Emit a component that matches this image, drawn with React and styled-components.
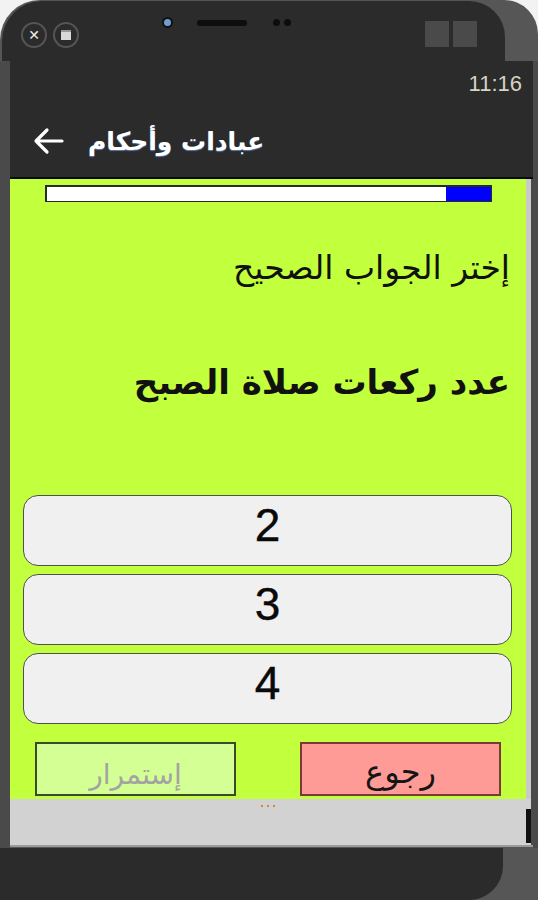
import React from "react";
import styled, { createGlobalStyle } from "styled-components";

const Global = createGlobalStyle`
  html, body { margin: 0; padding: 0; background: #f2f2f2; }
  body { font-family: "DejaVu Sans", "Liberation Sans", sans-serif; }
  * { box-sizing: border-box; }
`;

const Shell = styled.div`
  width: 538px;
  height: 900px;
  background: #565656;
  border-top-left-radius: 40px;
  border-top-right-radius: 34px;
  overflow: hidden;
  display: flex;
  flex-direction: column;
`;

const TopBezel = styled.div`
  height: 60px;
  width: 503px;
  background: #2b2b2b;
  border-top-left-radius: 40px;
  border-top-right-radius: 36px;
  margin-left: 2px;
  margin-top: 1px;
  display: flex;
  align-items: flex-start;
`;

const WinButtons = styled.div`
  display: flex;
  gap: 6px;
  margin: 21px 0 0 19px;
`;

const WinBtn = styled.div`
  width: 26px;
  height: 26px;
  border-radius: 50%;
  border: 2px solid #555;
  display: flex;
  align-items: center;
  justify-content: center;
  color: #eee;
  font-family: "DejaVu Sans", sans-serif;
  font-size: 14px;
  font-weight: bold;
  line-height: 1;
`;

const MiniSquare = styled.div`
  width: 10px;
  height: 10px;
  background: #d8d8d8;
  border-top: 2px solid #999;
`;

const Sensors = styled.div`
  display: flex;
  align-items: center;
  margin: 16px 0 0 83px;
`;

const Camera = styled.div`
  width: 11px;
  height: 11px;
  border-radius: 50%;
  background: #6f9fd0;
  border: 2px solid #111;
`;

const Speaker = styled.div`
  width: 50px;
  height: 6px;
  border-radius: 3px;
  background: #0d0d0d;
  margin-left: 24px;
`;

const Dot = styled.div`
  width: 7px;
  height: 7px;
  border-radius: 50%;
  background: #0d0d0d;
  margin-left: ${(p) => p.$ml}px;
`;

const Squares = styled.div`
  display: flex;
  gap: 4px;
  margin: 20px 28px 0 auto;
`;

const Square = styled.div`
  width: 24px;
  height: 26px;
  background: #4a4a4a;
`;

const Middle = styled.div`
  display: flex;
  height: 788px;
`;

const Strip = styled.div`
  width: ${(p) => p.$w}px;
  background: #4a4a4a;
`;

const Screen = styled.div`
  width: 523px;
  display: flex;
  flex-direction: column;
`;

const StatusBar = styled.div`
  height: 45px;
  background: #2b2b2b;
  display: flex;
  justify-content: flex-end;
  align-items: center;
  padding-right: 11px;
  padding-top: 2px;
`;

const Time = styled.span`
  font-family: "Liberation Sans", Arial, sans-serif;
  font-size: 22px;
  color: #d6d4c2;
`;

const AppBar = styled.div`
  height: 73px;
  background: #2b2b2b;
  border-bottom: 2px solid #0a0a0a;
  display: flex;
  align-items: center;
  padding-left: 22px;
  gap: 24px;
`;

const Title = styled.span`
  font-family: "DejaVu Sans", sans-serif;
  font-weight: bold;
  font-size: 25px;
  color: #fff;
  text-shadow: 0 1px 1px #5a7ab0;
  direction: rtl;
`;

const ContentRow = styled.div`
  display: flex;
  height: 620px;
`;

const Green = styled.div`
  width: 516px;
  background: #c2ff3d;
  display: flex;
  flex-direction: column;
`;

const ScrollTrack = styled.div`
  width: 5px;
  background: #c9c9c9;
`;

const ScrollGap = styled.div`
  flex: 1;
  background: #4a4a4a;
`;

const Progress = styled.div`
  margin: 6px 0 0 35px;
  width: 447px;
  height: 17px;
  background: #fff;
  border: 2px solid #2a2a2a;
  border-right-width: 1px;
  border-bottom-width: 1px;
  display: flex;
  justify-content: flex-end;
`;

const Fill = styled.div`
  height: 100%;
  background: #0000ff;
`;

const Instruction = styled.div`
  direction: rtl;
  margin-top: 44px;
  padding-right: 16px;
  font-size: 33px;
  color: #111;
  line-height: 44px;
`;

const Question = styled.div`
  direction: rtl;
  margin-top: 68px;
  padding-right: 16px;
  font-size: 34px;
  font-weight: bold;
  color: #111;
  line-height: 48px;
`;

const Options = styled.div`
  display: flex;
  flex-direction: column;
  gap: 8px;
  margin: 89px 14px 0 13px;
`;

const Option = styled.button`
  height: 71px;
  border-radius: 15px;
  background: #f0f0f0;
  border: 1.5px solid #505050;
  font-family: "Liberation Sans", Arial, sans-serif;
  font-size: 46px;
  color: #0a0a0a;
  -webkit-text-stroke: 0.4px #0a0a0a;
  display: flex;
  align-items: center;
  justify-content: center;
  padding: 0 0 11px 0;
`;

const Actions = styled.div`
  display: flex;
  justify-content: center;
  gap: 64px;
  margin-top: 18px;
`;

const ActionBtn = styled.button`
  width: 201px;
  height: 54px;
  background: ${(p) => p.$bg};
  border: 2px solid ${(p) => p.$bd};
  color: ${(p) => p.$fg};
  font-family: "DejaVu Sans", sans-serif;
  font-size: ${(p) => p.$fs}px;
  direction: rtl;
  display: flex;
  align-items: flex-end;
  justify-content: center;
  padding: 0 0 3px 0;
`;

const BottomArea = styled.div`
  height: 48px;
  display: flex;
  border-bottom: 2px solid #9a9a9a;
`;

const GrayPanel = styled.div`
  width: 516px;
  background: #d2d2d2;
  display: flex;
  justify-content: center;
  padding-top: 6px;
`;

const TinyDots = styled.div`
  display: flex;
  gap: 4px;
  height: 3px;
`;

const TinyDot = styled.div`
  width: 2px;
  height: 2px;
  background: #d58a3a;
`;

const Thumb = styled.div`
  width: 5px;
  background: #d2d2d2;
  display: flex;
  flex-direction: column;
  justify-content: flex-end;
  padding-bottom: 2px;
`;

const ThumbBar = styled.div`
  height: 34px;
  background: #111;
`;

const BottomBezel = styled.div`
  height: 52px;
  width: 503px;
  background: #2b2b2b;
  border-bottom-right-radius: 34px;
`;

function BackArrow() {
  return (
    <svg width="32" height="28" viewBox="0 0 32 28" fill="none">
      <path d="M30 14H4M15 3L4 14l11 11" stroke="#fff" strokeWidth="3.2" strokeLinecap="round" strokeLinejoin="round" />
    </svg>
  );
}

export default function App() {
  return (
    <>
      <Global />
      <Shell>
        <TopBezel>
          <WinButtons>
            <WinBtn>✕</WinBtn>
            <WinBtn>
              <MiniSquare />
            </WinBtn>
          </WinButtons>
          <Sensors>
            <Camera />
            <Speaker />
            <Dot $ml={26} />
            <Dot $ml={4} />
          </Sensors>
          <Squares>
            <Square />
            <Square />
          </Squares>
        </TopBezel>
        <Middle>
          <Strip $w={10} />
          <Screen>
            <StatusBar>
              <Time>11:16</Time>
            </StatusBar>
            <AppBar>
              <BackArrow />
              <Title>عبادات وأحكام</Title>
            </AppBar>
            <ContentRow>
              <Green>
                <Progress>
                  <Fill style={{ width: "45px" }} />
                </Progress>
                <Instruction>إختر الجواب الصحيح</Instruction>
                <Question>عدد ركعات صلاة الصبح</Question>
                <Options>
                  <Option>2</Option>
                  <Option>3</Option>
                  <Option>4</Option>
                </Options>
                <Actions>
                  <ActionBtn $bg="#d3ff95" $bd="#3a4a2a" $fg="#a3a3a3" $fs={28}>إستمرار</ActionBtn>
                  <ActionBtn $bg="#ff9b97" $bd="#7a3a36" $fg="#151515" $fs={32}>رجوع</ActionBtn>
                </Actions>
              </Green>
              <ScrollTrack />
              <ScrollGap />
            </ContentRow>
            <BottomArea>
              <GrayPanel>
                <TinyDots>
                  <TinyDot />
                  <TinyDot />
                  <TinyDot />
                </TinyDots>
              </GrayPanel>
              <Thumb>
                <ThumbBar />
              </Thumb>
              <ScrollGap />
            </BottomArea>
          </Screen>
          <Strip $w={5} />
        </Middle>
        <BottomBezel />
      </Shell>
    </>
  );
}
